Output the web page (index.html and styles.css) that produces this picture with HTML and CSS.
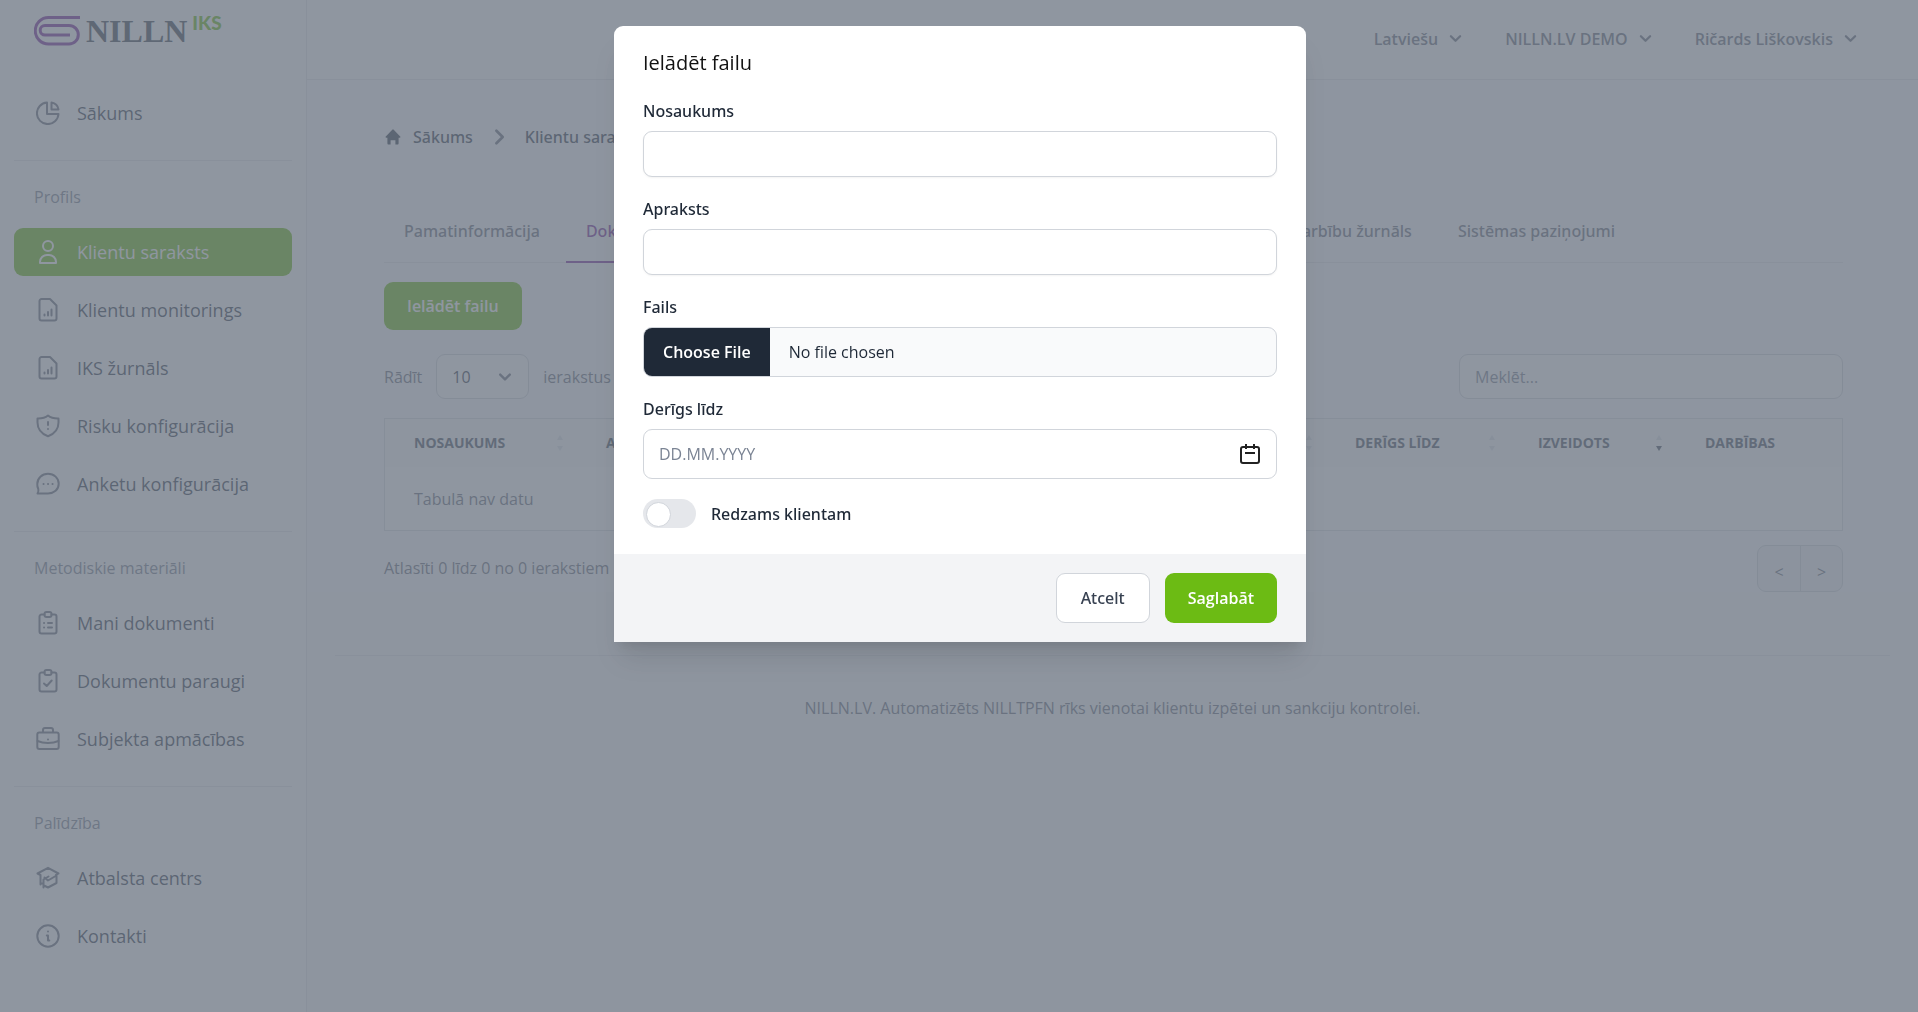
FILE: index.html
```html
<!DOCTYPE html>
<html lang="lv">
<head>
<meta charset="utf-8">
<meta name="viewport" content="width=device-width, initial-scale=1">
<title>NILLN IKS</title>
<link rel="stylesheet" href="styles.css">
</head>
<body>
<div class="layout">
  <aside class="sidebar">
    <a class="logo" href="#">
      <svg class="logo__mark" viewBox="0 0 46 30" fill="none" stroke="currentColor" stroke-width="3"><path d="M46 1.500H14.500a13.200 13.200 0 0 0 0 26.500H35a9.300 9.300 0 0 0 0-18.600H11a4.800 4.800 0 0 0 0 9.600H36"/></svg>
      <span class="logo__name">NILLN</span>
      <span class="logo__suffix">IKS</span>
    </a>
    <nav class="menu">
      <section class="menu__group menu__group--first">
        <a class="menu__item" href="#"><svg class="icon" viewBox="0 0 24 24"><path d="M11 1.500V13h11.500A10.800 10.800 0 1 1 11 1.500Z"/><path d="M15.500 1.500a8.500 8.500 0 0 1 7 7h-7Z"/></svg>Sākums</a>
      </section>
      <section class="menu__group">
        <h2 class="menu__title">Profils</h2>
        <a class="menu__item menu__item--active" href="#"><svg class="icon" viewBox="0 0 24 24"><circle cx="12" cy="6" r="5"/><path d="M4 23v-1a7 7 0 0 1 7-7h2a7 7 0 0 1 7 7v1Z"/></svg>Klientu saraksts</a>
        <a class="menu__item" href="#"><svg class="icon" viewBox="0 0 24 24"><path d="M5.500 1H14l6.500 6.500v13a2 2 0 0 1-2 2h-13a2 2 0 0 1-2-2V3a2 2 0 0 1 2-2Z"/><path d="M8.500 16.500v1M12 14v3.500M15.500 11.500v6"/></svg>Klientu monitorings</a>
        <a class="menu__item" href="#"><svg class="icon" viewBox="0 0 24 24"><path d="M5.500 1H14l6.500 6.500v13a2 2 0 0 1-2 2h-13a2 2 0 0 1-2-2V3a2 2 0 0 1 2-2Z"/><path d="M8.500 16.500v1M12 14v3.500M15.500 11.500v6"/></svg>IKS žurnāls</a>
        <a class="menu__item" href="#"><svg class="icon" viewBox="0 0 24 24"><path d="M12 1.500C9 4 5.500 4.600 1.500 4.500v4C1.500 15 6 20 12 22.300 18 20 22.500 15 22.500 8.500v-4C18.500 4.600 15 4 12 1.500Z"/><path d="M12 8v3M12 15v.1"/></svg>Risku konfigurācija</a>
        <a class="menu__item" href="#"><svg class="icon" viewBox="0 0 24 24"><path d="M1.500 21.500c1-1.500 1.300-2.500.8-4.500A9.500 9.500 0 0 1 1.300 12C1.300 6 6 1.800 12 1.800S22.700 6 22.700 11.800 18 21.500 12 21.500Z"/><path d="M7.500 12h.1M12 12h.1M16.500 12h.1"/></svg>Anketu konfigurācija</a>
      </section>
      <section class="menu__group">
        <h2 class="menu__title">Metodiskie materiāli</h2>
        <a class="menu__item" href="#"><svg class="icon" viewBox="0 0 24 24"><path d="M8.500 3.500h-3a2 2 0 0 0-2 2v15a2 2 0 0 0 2 2h13a2 2 0 0 0 2-2v-15a2 2 0 0 0-2-2h-3"/><rect x="8.500" y="1" width="7" height="5" rx="2"/><path d="M8 12h.1M12 12h4M8 16.500h.1M12 16.500h4"/></svg>Mani dokumenti</a>
        <a class="menu__item" href="#"><svg class="icon" viewBox="0 0 24 24"><path d="M8.500 3.500h-3a2 2 0 0 0-2 2v15a2 2 0 0 0 2 2h13a2 2 0 0 0 2-2v-15a2 2 0 0 0-2-2h-3"/><rect x="8.500" y="1" width="7" height="5" rx="2"/><path d="m8 14.500 2.700 2.500 5-5.500"/></svg>Dokumentu paraugi</a>
        <a class="menu__item" href="#"><svg class="icon" viewBox="0 0 24 24"><rect x="1.300" y="5.500" width="21.400" height="16.500" rx="2"/><path d="M7 5V3a2 2 0 0 1 2-2h6a2 2 0 0 1 2 2v2M1.500 14c6 2.600 15 2.600 21 0M12 12.500v.1"/></svg>Subjekta apmācības</a>
      </section>
      <section class="menu__group">
        <h2 class="menu__title">Palīdzība</h2>
        <a class="menu__item" href="#"><svg class="icon" viewBox="0 0 24 24"><path d="M1.500 7.500 12 1.800l10.500 5.700-2.500 1.400M1.500 7.500 4.500 9v9.500M20.500 9v8L12 21.500l-4-2M7.500 21.500v-8l5-3M8.500 11.500l3.500 3 8.500-5M4.500 17.500h3"/></svg>Atbalsta centrs</a>
        <a class="menu__item" href="#"><svg class="icon" viewBox="0 0 24 24"><circle cx="12" cy="12" r="10.700"/><path d="M12 7.500v.1M10.800 11.500H12V16.500h1.300"/></svg>Kontakti</a>
      </section>
    </nav>
  </aside>

  <div class="page">
    <header class="topbar">
      <button class="topbar__item" type="button">Latviešu <svg class="chevron" viewBox="0 0 20 20"><path d="m6 8 4 4 4-4"/></svg></button>
      <button class="topbar__item" type="button">NILLN.LV DEMO <svg class="chevron" viewBox="0 0 20 20"><path d="m6 8 4 4 4-4"/></svg></button>
      <button class="topbar__item" type="button">Ričards Liškovskis <svg class="chevron" viewBox="0 0 20 20"><path d="m6 8 4 4 4-4"/></svg></button>
    </header>

    <main class="content">
      <nav class="crumbs">
        <a class="crumbs__link" href="#"><svg class="crumbs__home" viewBox="0 0 20 20"><path d="M10.900.9a1.200 1.200 0 0 0-1.800 0L1 9.300c-.8.900-.2 1.700.8 1.700H3v7a1.800 1.800 0 0 0 1.800 1.500H7V14h6v5.500h2.200A1.800 1.800 0 0 0 17 18v-7h1.200c1 0 1.600-.8.800-1.700Z"/></svg>Sākums</a>
        <svg class="crumbs__sep" viewBox="0 0 20 20"><path d="m6 3 7 7-7 7"/></svg>
        <a class="crumbs__link" href="#">Klientu saraksts</a>
      </nav>

      <nav class="tabs">
        <a class="tab" href="#">Pamatinformācija</a>
        <a class="tab tab--active" href="#">Dokumenti</a>
        <a class="tab tab--log" href="#">Darbību žurnāls</a>
        <a class="tab" href="#">Sistēmas paziņojumi</a>
      </nav>

      <button class="button button--upload" type="button">Ielādēt failu</button>

      <div class="tools">
        <label class="length">Rādīt
          <span class="length__box">
            <select class="length__select"><option>10</option><option>25</option></select>
            <svg class="chevron length__chevron" viewBox="0 0 20 20"><path d="m6 8 4 4 4-4"/></svg>
          </span>
          ierakstus</label>
        <input class="search" type="search" placeholder="Meklēt..." aria-label="Meklēt">
      </div>

      <table class="grid">
        <colgroup><col class="grid__c1"><col><col class="grid__c3"><col class="grid__c4"><col class="grid__c5"></colgroup>
        <thead>
          <tr>
            <th><div class="head">Nosaukums<svg class="sort" viewBox="0 0 6 16"><path d="m3 0 3 5H0ZM0 11h6l-3 5Z"/></svg></div></th>
            <th><div class="head">Apraksts<svg class="sort" viewBox="0 0 6 16"><path d="m3 0 3 5H0ZM0 11h6l-3 5Z"/></svg></div></th>
            <th><div class="head">Derīgs līdz<svg class="sort" viewBox="0 0 6 16"><path d="m3 0 3 5H0ZM0 11h6l-3 5Z"/></svg></div></th>
            <th><div class="head">Izveidots<svg class="sort" viewBox="0 0 6 16"><path d="m3 0 3 5H0Z"/><path class="sort__on" d="M0 11h6l-3 5Z"/></svg></div></th>
            <th><div class="head">Darbības</div></th>
          </tr>
        </thead>
        <tbody><tr><td colspan="5">Tabulā nav datu</td></tr></tbody>
      </table>

      <div class="summary">
        <span>Atlasīti 0 līdz 0 no 0 ierakstiem</span>
        <div class="pager"><button class="pager__button" type="button">&lt;</button><button class="pager__button" type="button">&gt;</button></div>
      </div>
    </main>

    <footer class="footer"><p class="footer__text">NILLN.LV. Automatizēts NILLTPFN rīks vienotai klientu izpētei un sankciju kontrolei.</p></footer>
  </div>
</div>

<div class="backdrop">
  <form class="modal" role="dialog" aria-modal="true" aria-labelledby="modal-title">
    <div class="modal__body">
      <h1 class="modal__title" id="modal-title">Ielādēt failu</h1>
      <div class="field">
        <label class="field__label" for="name">Nosaukums</label>
        <input class="field__input" id="name" type="text">
      </div>
      <div class="field">
        <label class="field__label" for="description">Apraksts</label>
        <input class="field__input" id="description" type="text">
      </div>
      <div class="field">
        <label class="field__label" for="file">Fails</label>
        <input class="field__file" id="file" type="file">
      </div>
      <div class="field">
        <label class="field__label" for="valid">Derīgs līdz</label>
        <div class="field__date">
          <input class="field__input field__input--tall" id="valid" type="text" placeholder="DD.MM.YYYY">
          <svg class="field__calendar" viewBox="0 0 20 20"><rect x="1" y="3" width="18" height="16" rx="2"/><path d="M6 0v5M14 0v5M5 9h10"/></svg>
        </div>
      </div>
      <label class="switch"><input class="switch__input" type="checkbox">Redzams klientam</label>
    </div>
    <div class="modal__footer">
      <button class="button button--plain" type="button">Atcelt</button>
      <button class="button" type="submit">Saglabāt</button>
    </div>
  </form>
</div>
</body>
</html>
```
FILE: styles.css
```css
:root {
  --font-medium: "Noto Sans", "Open Sans", sans-serif;
  --line: #e5e7eb;
}

* { box-sizing: border-box; margin: 0; }

body {
  font: 400 16px/24px "Open Sans", "Noto Sans", sans-serif;
  color: #6b7280;
  background: #f9fafb;
}

a { color: inherit; text-decoration: none; }
button, input, select { font: inherit; color: inherit; }
svg { flex: none; fill: none; stroke: currentColor; stroke-linecap: round; stroke-linejoin: round; }

.layout { display: flex; min-height: 100vh; }

/* Sidebar */
.sidebar {
  flex: none;
  width: 307px;
  padding: 11px 14px 0;
  background: #fff;
  border-right: 1px solid var(--line);
}
.logo { display: flex; align-items: flex-start; height: 40px; padding-left: 20px; }
.logo__mark { width: 46px; height: 30px; margin-top: 5px; color: #7e2f9e; stroke-linecap: butt; }
.logo__name { margin-left: 6px; font: 700 32px/40px "Liberation Serif", serif; color: #404a55; }
.logo__suffix { margin-left: 5px; font: 900 19px/23px Lato, sans-serif; color: #6cbb14; }

.menu__group { padding: 24px 0 23px; border-top: 1px solid var(--line); }
.menu__group--first { border-top: 0; padding-top: 38px; }
.menu__title { margin-bottom: 19px; padding-left: 20px; font-size: 16px; font-weight: 400; color: #7b8494; }
.menu__item {
  display: flex;
  align-items: center;
  gap: 17px;
  height: 48px;
  margin-bottom: 10px;
  padding-left: 22px;
  border-radius: 9px;
  font-size: 18px;
  color: #374151;
}
.menu__item:last-child { margin-bottom: 0; }
.menu__item--active, .menu__item--active .icon { color: #fff; }
.menu__item--active { background: #6cbb14; }
.icon { width: 24px; height: 24px; stroke-width: 2; color: #6b7280; }

/* Top bar */
.page { flex: 1; min-width: 0; }
.topbar {
  display: flex;
  justify-content: flex-end;
  gap: 38px;
  height: 80px;
  padding: 0 56px 2px 24px;
  background: #fff;
  border-bottom: 1px solid var(--line);
}
.topbar__item {
  display: flex;
  align-items: center;
  gap: 6px;
  padding: 0;
  border: 0;
  background: none;
  font-weight: 600;
  font-size: 16px;
  color: #6b7280;
}
.chevron { width: 23px; height: 23px; stroke-width: 2; }

/* Content */
.content { padding: 45px 75px 0 77px; background: #fcfcfd; }
.crumbs { display: flex; align-items: center; height: 24px; color: #374151; font-family: var(--font-medium); font-weight: 500; }
.crumbs__link { display: flex; align-items: center; gap: 12px; }
.crumbs__home { width: 16px; height: 16px; margin-left: 1px; fill: currentColor; stroke: none; }
.crumbs__sep { width: 18px; height: 18px; margin: 0 16px 0 18px; stroke-width: 3; color: #6b7280; }

.tabs {
  display: flex;
  gap: 6px;
  margin-top: 50px;
  padding-right: 208px;
  border-bottom: 1px solid var(--line);
}
.tab {
  margin-bottom: -1px;
  padding: 20px 20px 18px;
  border-bottom: 2px solid transparent;
  font-family: var(--font-medium);
  font-weight: 500;
}
.tab--active { color: #7e2f9e; border-color: #7e2f9e; }
.tab--log { margin-left: auto; }

.button {
  height: 50px;
  padding: 0 23px;
  border: 0;
  border-radius: 9px;
  background: #6cbb14;
  color: #fff;
  font-size: 16px;
  font-weight: 600;
}
.button--upload { height: 48px; margin-top: 19px; }
.button--plain {
  padding: 0 24px;
  border: 1px solid #d1d5db;
  background: #fff;
  color: #374151;
  font-family: var(--font-medium);
  font-weight: 500;
}

.tools { display: flex; justify-content: space-between; align-items: center; margin-top: 24px; }
.length { display: flex; align-items: center; gap: 14px; }
.length__box { display: grid; align-items: center; width: 93px; }
.length__select, .length__chevron { grid-area: 1 / 1; }
.length__select {
  height: 45px;
  padding: 0 15px;
  appearance: none;
  border: 1px solid #d1d5db;
  border-radius: 9px;
  background: #fff;
  color: #374151;
}
.length__chevron { width: 24px; height: 24px; justify-self: end; margin-right: 12px; pointer-events: none; }
.search {
  width: 384px;
  height: 45px;
  padding: 0 15px;
  border: 1px solid #d1d5db;
  border-radius: 9px;
  background: #fff;
}
.search::placeholder { color: #7b8494; }

.grid {
  width: 100%;
  margin-top: 19px;
  table-layout: fixed;
  border-collapse: separate;
  border-spacing: 0;
  border: 1px solid #d9dde3;
  background: #fff;
}
.grid__c1 { width: 192px; }
.grid__c3 { width: 183px; }
.grid__c4 { width: 167px; }
.grid__c5 { width: 166px; }
.grid th { height: 48px; padding: 0 14px 0 29px; background: #f9fafb; text-align: left; }
.grid td { height: 63px; padding: 0 29px; }
.head {
  display: flex;
  align-items: center;
  justify-content: space-between;
  font-size: 14px;
  font-weight: 700;
  text-transform: uppercase;
  white-space: nowrap;
  color: #4b5563;
}
.sort { width: 6px; height: 16px; fill: #dfe2e7; stroke: none; }
.sort__on { fill: #4b5563; }

.summary { display: flex; justify-content: space-between; height: 47px; margin-top: 14px; }
.summary span { margin-top: 11px; }
.pager {
  display: flex;
  height: 47px;
  overflow: hidden;
  border: 1px solid #d1d5db;
  border-radius: 9px;
  background: #f3f4f6;
}
.pager__button { width: 42px; padding: 6px 0 0; border: 0; background: none; }
.pager__button + .pager__button { border-left: 1px solid #d1d5db; }

.footer { padding: 63px 28px 0; }
.footer__text { padding: 40px 0; border-top: 1px solid var(--line); text-align: center; }

/* Upload dialog */
.backdrop {
  position: fixed;
  inset: 0;
  display: flex;
  align-items: flex-start;
  justify-content: center;
  padding: 26px 24px 26px 26px;
  background: rgb(106 115 128 / 75%);
}
.modal {
  width: 100%;
  max-width: 692px;
  border-radius: 9px 9px 0 0;
  background: #fff;
  box-shadow: 0 22px 28px -6px rgb(0 0 0 / 10%), 0 8px 12px -6px rgb(0 0 0 / 10%);
}
.modal__body { display: flex; flex-direction: column; gap: 20px; padding: 21px 29px 26px; color: #1f2937; }
.modal__title { font-size: 20px; font-weight: 400; line-height: 32px; color: #111; }
.field { display: flex; flex-direction: column; gap: 8px; }
.field__label { font-family: var(--font-medium); font-weight: 500; }
.field__input, .field__file {
  width: 100%;
  height: 46px;
  padding: 0 15px;
  border: 1px solid #d1d5db;
  border-radius: 9px;
  background: #fff;
  box-shadow: 0 1px 2px rgb(0 0 0 / 5%);
}
.field__input--tall { height: 50px; box-shadow: none; }
.field__input::placeholder { color: #7b8494; opacity: 1; }
.field__file { height: 50px; padding: 0; background: #f9fafb; box-shadow: none; overflow: hidden; }
.field__file::file-selector-button {
  height: 48px;
  margin: 0 19px 0 0;
  padding: 0 19px;
  border: 0;
  background: #1f2937;
  color: #fff;
  font: inherit;
  font-weight: 600;
}
.field__date { display: grid; align-items: center; }
.field__date > * { grid-area: 1 / 1; }
.field__calendar { width: 20px; height: 20px; justify-self: end; margin-right: 17px; stroke-width: 2; stroke-linecap: butt; color: #222; }
.switch { display: flex; align-items: center; gap: 15px; height: 29px; font-family: var(--font-medium); font-weight: 500; }
.switch__input {
  width: 53px;
  height: 29px;
  padding: 3px;
  appearance: none;
  border-radius: 15px;
  background: #e5e7eb;
}
.switch__input::before {
  content: "";
  display: block;
  width: 23px;
  height: 23px;
  border: 1px solid #d1d5db;
  border-radius: 50%;
  background: #fff;
}
.modal__footer {
  display: flex;
  justify-content: flex-end;
  gap: 15px;
  padding: 19px 29px;
  background: #f3f4f6;
}
```
